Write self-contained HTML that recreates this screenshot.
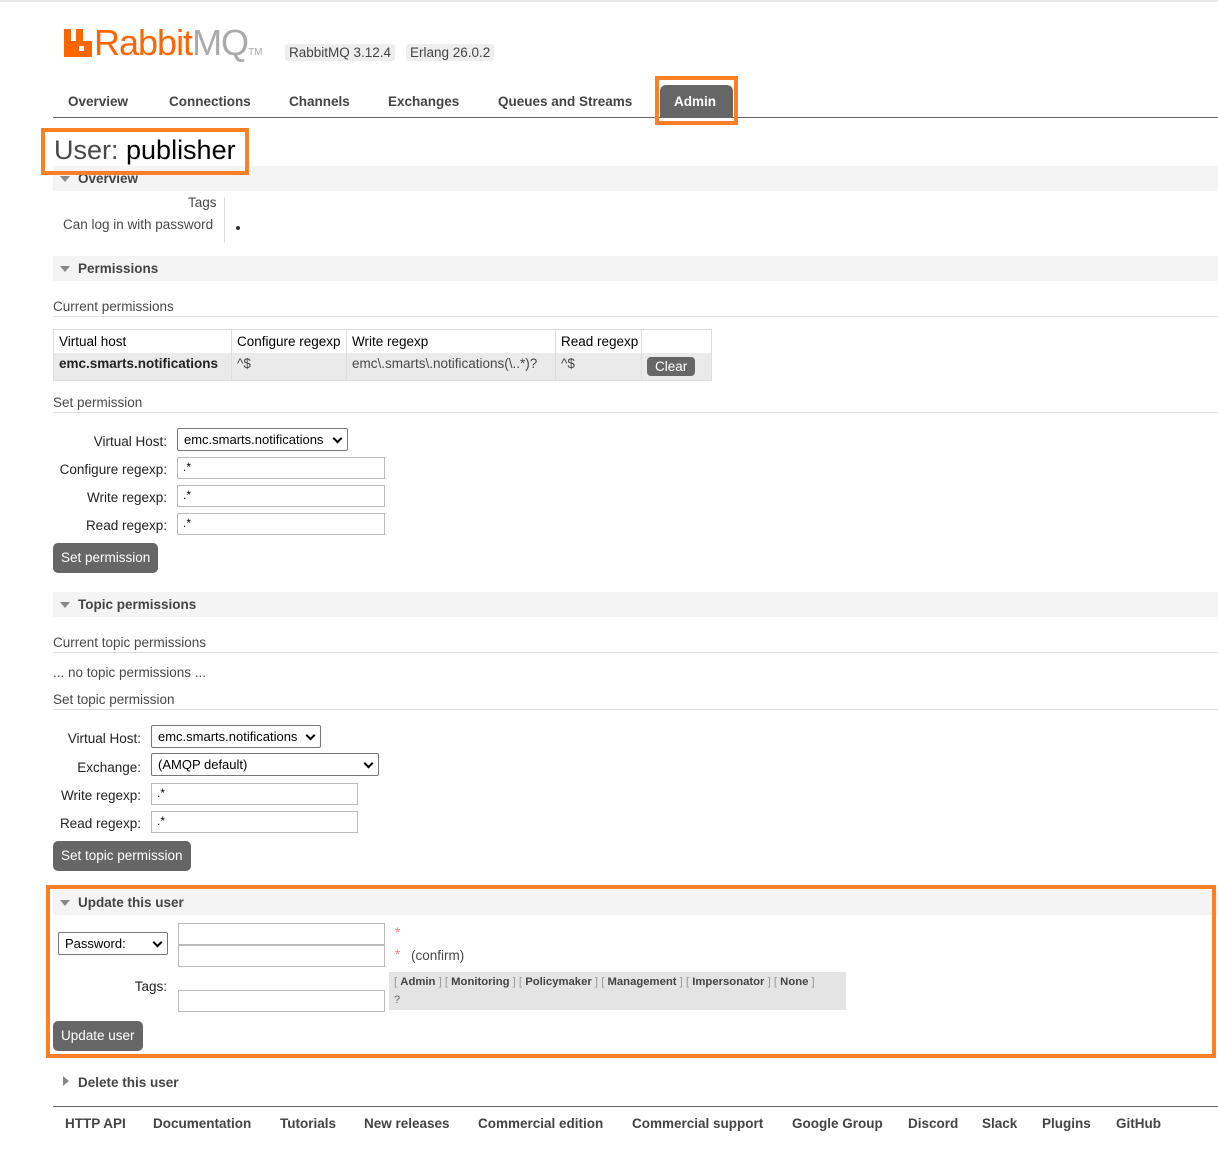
<!DOCTYPE html>
<html><head><meta charset="utf-8"><style>
body{margin:0;width:1218px;height:1154px;background:#fff;font-family:"Liberation Sans",sans-serif;font-size:13.5px;color:#484848;position:relative;overflow:hidden}
.a{position:absolute;white-space:nowrap}
.b{font-weight:bold}
.sec{position:absolute;left:53px;width:1165px;height:25px;background:#f4f4f4;}
.sec span{position:absolute;left:25px;top:5px;font-weight:bold;font-size:13.5px;color:#444}
.tri{position:absolute;left:7px;top:10px;width:0;height:0;border-left:5px solid transparent;border-right:5px solid transparent;border-top:6px solid #888}
.hr{position:absolute;left:53px;width:1165px;height:1px;background:#ddd}
.inp{position:absolute;border:1px solid #bbb;height:20px;background:#fff;box-sizing:border-box;font-size:12px;padding:2px 5px;color:#000}
.sel{position:absolute;border:1px solid #777;border-radius:2px;height:23px;box-sizing:border-box;font-size:13px;padding:3px 6px;color:#000;background:#fff}
.sel:after{content:"";position:absolute;right:6px;top:6px;width:5px;height:5px;border-right:2px solid #000;border-bottom:2px solid #000;transform:rotate(45deg)}
.btn{position:absolute;background:#666;color:#fff;border-radius:5px;height:30px;line-height:30px;padding:0 8px;font-size:13.5px}
.r{text-align:right}
.ob{position:absolute;border:4px solid #ff7f27;box-sizing:border-box}
</style></head><body>
<div style="position:absolute;left:0;top:0;width:1218px;height:2px;background:#e8e8e8"></div>
<svg class="a" style="left:64px;top:29px" width="28" height="28" viewBox="0 0 28 28"><path d="M0 0h7v12h5V0h7v12h9v16H0z" fill="#ff6600"/><rect x="15" y="17" width="5" height="5" fill="#fff"/></svg>
<div class="a" style="left:94px;top:22px;font-size:36px;color:#ff6600;letter-spacing:-1px">Rabbit<span style="color:#aaa">MQ</span><span style="font-size:10px;color:#aaa;letter-spacing:0">TM</span></div>
<div class="a" style="left:285px;top:44px;background:#eee;border-radius:3px;padding:1px 4px;font-size:13.5px;color:#444">RabbitMQ 3.12.4</div>
<div class="a" style="left:406px;top:44px;background:#eee;border-radius:3px;padding:1px 4px;font-size:13.5px;color:#444">Erlang 26.0.2</div>
<div class="a b" style="left:68px;top:94px;color:#444">Overview</div>
<div class="a b" style="left:169px;top:94px;color:#444">Connections</div>
<div class="a b" style="left:289px;top:94px;color:#444">Channels</div>
<div class="a b" style="left:388px;top:94px;color:#444">Exchanges</div>
<div class="a b" style="left:498px;top:94px;color:#444">Queues and Streams</div>
<div class="a" style="left:660px;top:85px;width:73px;height:32px;background:#666;border-radius:6px 6px 0 0"></div>
<div class="a b" style="left:674px;top:94px;color:#fff">Admin</div>
<div class="a" style="left:53px;top:117px;width:1165px;height:1px;background:#666"></div>
<div class="ob" style="left:655px;top:76px;width:83px;height:49px"></div>
<div class="sec" style="top:166px"><div class="tri"></div><span>Overview</span></div>
<div class="a" style="left:54px;top:135px;font-size:27px;color:#484848;background:#fff;padding-right:4px">User: <span style="color:#000">publisher</span></div>
<div class="ob" style="left:41px;top:128px;width:208px;height:47px"></div>
<div class="a" style="left:188px;top:195px">Tags</div>
<div class="a" style="left:63px;top:217px">Can log in with password</div>
<div class="a" style="left:224px;top:197px;width:1px;height:46px;background:#ddd"></div>
<div class="a" style="left:236px;top:226px;width:4px;height:4px;border-radius:2px;background:#333"></div>
<div class="sec" style="top:256px"><div class="tri"></div><span>Permissions</span></div>
<div class="a" style="left:53px;top:299px">Current permissions</div>
<div class="hr" style="top:316px"></div>
<div class="a" style="left:53px;top:329px;width:659px;height:52px;border:1px solid #ddd;box-sizing:border-box"></div>
<div class="a" style="left:54px;top:353px;width:657px;height:27px;background:#eaeaea"></div>
<div class="a" style="left:231px;top:329px;width:1px;height:52px;background:#ddd"></div>
<div class="a" style="left:346px;top:329px;width:1px;height:52px;background:#ddd"></div>
<div class="a" style="left:555px;top:329px;width:1px;height:52px;background:#ddd"></div>
<div class="a" style="left:641px;top:329px;width:1px;height:52px;background:#ddd"></div>
<div class="a" style="left:59px;top:334px;color:#000">Virtual host</div>
<div class="a" style="left:237px;top:334px;color:#000">Configure regexp</div>
<div class="a" style="left:352px;top:334px;color:#000">Write regexp</div>
<div class="a" style="left:561px;top:334px;color:#000">Read regexp</div>
<div class="a b" style="left:59px;top:356px;color:#222">emc.smarts.notifications</div>
<div class="a" style="left:237px;top:356px">^$</div>
<div class="a" style="left:352px;top:356px">emc\.smarts\.notifications(\..*)?</div>
<div class="a" style="left:561px;top:356px">^$</div>
<div class="btn" style="left:647px;top:357px;height:19px;line-height:19px;border-radius:4px">Clear</div>
<div class="a" style="left:53px;top:395px">Set permission</div>
<div class="hr" style="top:412px"></div>
<div class="a r" style="left:53px;width:114px;top:434px;color:#222">Virtual Host:</div>
<div class="sel" style="left:177px;top:428px;width:171px">emc.smarts.notifications</div>
<div class="a r" style="left:53px;width:114px;top:462px;color:#222">Configure regexp:</div>
<div class="inp" style="left:177px;top:457px;width:208px;height:22px">.*</div>
<div class="a r" style="left:53px;width:114px;top:490px;color:#222">Write regexp:</div>
<div class="inp" style="left:177px;top:485px;width:208px;height:22px">.*</div>
<div class="a r" style="left:53px;width:114px;top:518px;color:#222">Read regexp:</div>
<div class="inp" style="left:177px;top:513px;width:208px;height:22px">.*</div>
<div class="btn" style="left:53px;top:543px">Set permission</div>
<div class="sec" style="top:592px"><div class="tri"></div><span>Topic permissions</span></div>
<div class="a" style="left:53px;top:635px">Current topic permissions</div>
<div class="hr" style="top:652px"></div>
<div class="a" style="left:53px;top:665px">... no topic permissions ...</div>
<div class="a" style="left:53px;top:692px">Set topic permission</div>
<div class="hr" style="top:709px"></div>
<div class="a r" style="left:53px;width:88px;top:731px;color:#222">Virtual Host:</div>
<div class="sel" style="left:151px;top:725px;width:170px">emc.smarts.notifications</div>
<div class="a r" style="left:53px;width:88px;top:760px;color:#222">Exchange:</div>
<div class="sel" style="left:151px;top:753px;width:228px">(AMQP default)</div>
<div class="a r" style="left:53px;width:88px;top:788px;color:#222">Write regexp:</div>
<div class="inp" style="left:151px;top:783px;width:207px;height:22px">.*</div>
<div class="a r" style="left:53px;width:88px;top:816px;color:#222">Read regexp:</div>
<div class="inp" style="left:151px;top:811px;width:207px;height:22px">.*</div>
<div class="btn" style="left:53px;top:841px">Set topic permission</div>
<div class="sec" style="top:890px"><div class="tri"></div><span>Update this user</span></div>
<div class="sel" style="left:58px;top:932px;width:110px">Password:</div>
<div class="inp" style="left:178px;top:923px;width:207px;height:22px"></div>
<div class="inp" style="left:178px;top:945px;width:207px;height:22px"></div>
<div class="a" style="left:395px;top:925px;color:#f08080">*</div>
<div class="a" style="left:395px;top:947px;color:#f08080">*</div>
<div class="a" style="left:411px;top:948px">(confirm)</div>
<div class="a r" style="left:53px;width:114px;top:979px;color:#222">Tags:</div>
<div class="inp" style="left:178px;top:990px;width:207px;height:22px"></div>
<div class="a" style="left:389px;top:972px;width:457px;height:38px;background:#e4e4e4"></div>
<div class="a" style="left:394px;top:976px;font-size:11.3px;color:#999">[ <b style="color:#444">Admin</b> ] [ <b style="color:#444">Monitoring</b> ] [ <b style="color:#444">Policymaker</b> ] [ <b style="color:#444">Management</b> ] [ <b style="color:#444">Impersonator</b> ] [ <b style="color:#444">None</b> ]</div>
<div class="a" style="left:394px;top:994px;font-size:11px;color:#666">?</div>
<div class="btn" style="left:53px;top:1021px">Update user</div>
<div class="ob" style="left:46px;top:885px;width:1170px;height:173px"></div>
<div class="a" style="left:63px;top:1076px;width:0;height:0;border-top:5px solid transparent;border-bottom:5px solid transparent;border-left:6px solid #888"></div>
<div class="a b" style="left:78px;top:1075px;color:#444">Delete this user</div>
<div class="a" style="left:53px;top:1106px;width:1165px;height:1px;background:#666"></div>
<div class="a b" style="left:65px;top:1116px;color:#444">HTTP API</div>
<div class="a b" style="left:153px;top:1116px;color:#444">Documentation</div>
<div class="a b" style="left:280px;top:1116px;color:#444">Tutorials</div>
<div class="a b" style="left:364px;top:1116px;color:#444">New releases</div>
<div class="a b" style="left:478px;top:1116px;color:#444">Commercial edition</div>
<div class="a b" style="left:632px;top:1116px;color:#444">Commercial support</div>
<div class="a b" style="left:792px;top:1116px;color:#444">Google Group</div>
<div class="a b" style="left:908px;top:1116px;color:#444">Discord</div>
<div class="a b" style="left:982px;top:1116px;color:#444">Slack</div>
<div class="a b" style="left:1042px;top:1116px;color:#444">Plugins</div>
<div class="a b" style="left:1116px;top:1116px;color:#444">GitHub</div>
</body></html>
